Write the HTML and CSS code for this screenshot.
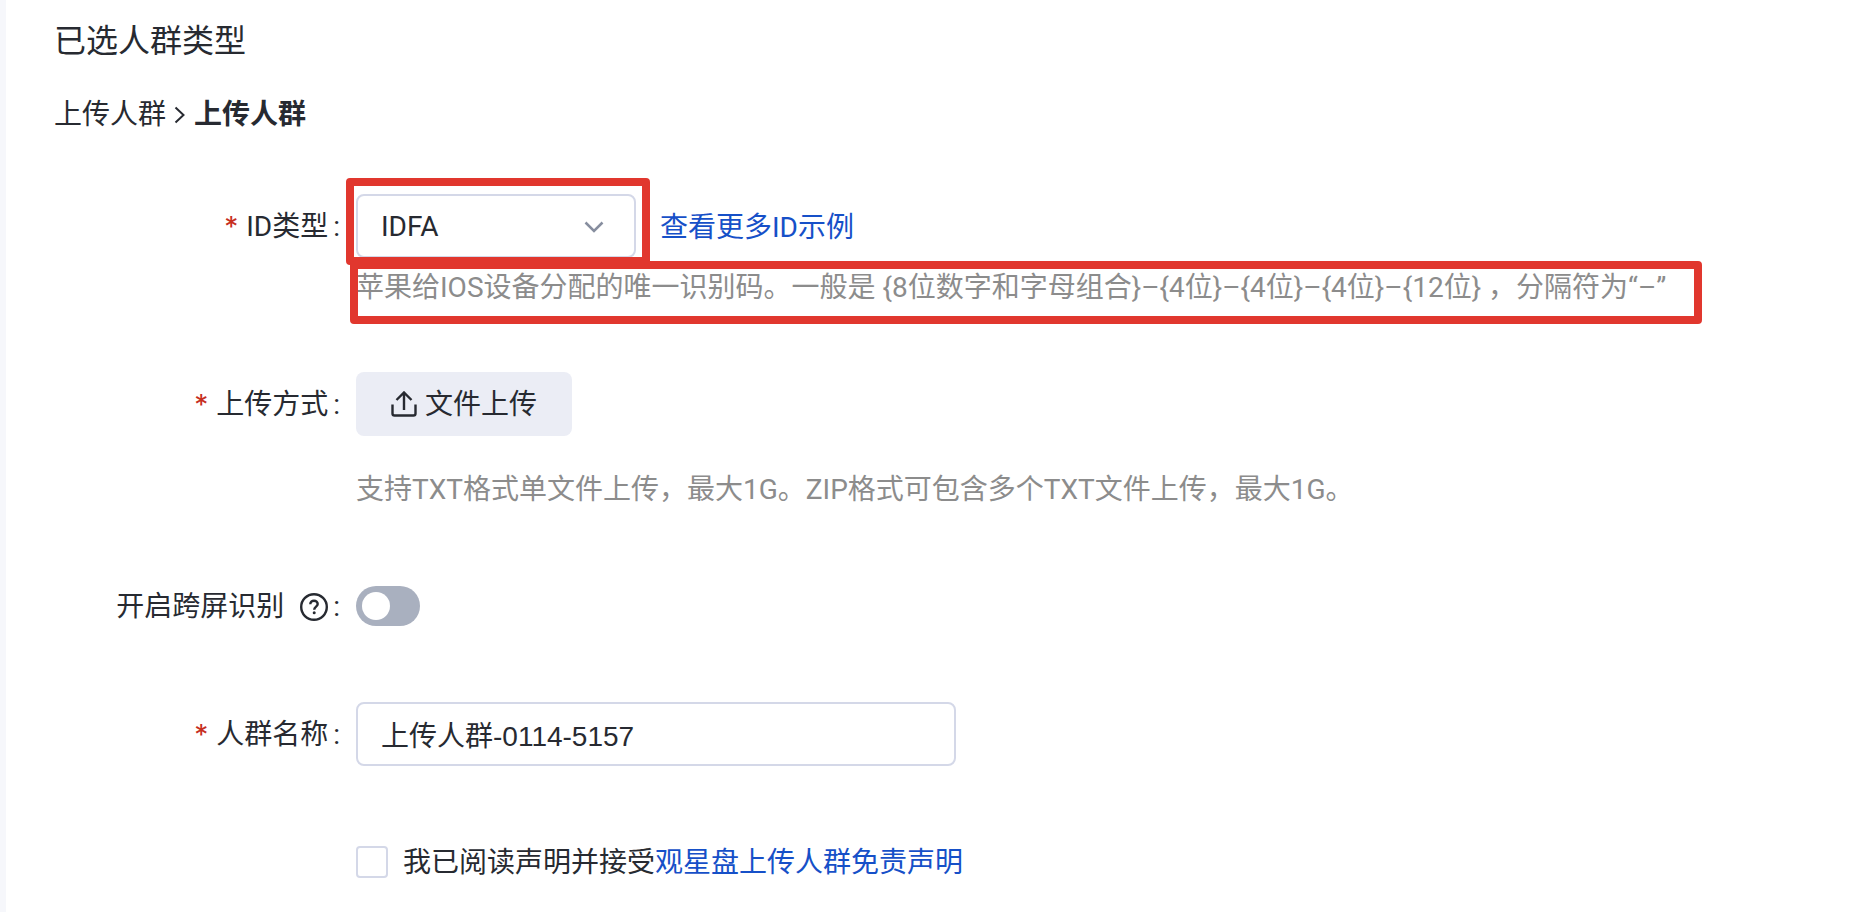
FILE: index.html
```html
<!DOCTYPE html>
<html lang="zh-CN">
<head>
<meta charset="utf-8">
<title>上传人群</title>
<link rel="stylesheet" href="styles.css">
</head>
<body>
<main class="page">
  <h1 class="title">已选人群类型</h1>
  <nav class="crumbs">
    <span>上传人群</span>
    <svg class="crumb-sep" viewBox="0 0 12 20" aria-hidden="true"><path d="M1.5 2.5 9.5 10l-8 7.5"/></svg>
    <strong>上传人群</strong>
  </nav>

  <form class="form">
    <div class="row row-id">
      <label class="label" for="id-type"><span class="req">*</span>ID类型<span class="colon">:</span></label>
      <div class="field">
        <div class="line">
          <div class="select-box">
            <select id="id-type" class="select"><option>IDFA</option></select>
            <svg class="chevron" viewBox="0 0 20 12" aria-hidden="true"><path d="M1.5 1.5 10 10l8.500-8.500"/></svg>
            <span class="mark mark-select"></span>
          </div>
          <a class="link more" href="#">查看更多ID示例</a>
        </div>
        <div class="hint-box">
          <p class="hint">苹果给IOS设备分配的唯一识别码。一般是 {8位数字和字母组合}–{4位}–{4位}–{4位}–{12位} ，分隔符为“–”</p>
          <span class="mark mark-hint"></span>
        </div>
      </div>
    </div>

    <div class="row row-upload">
      <label class="label" for="upload"><span class="req">*</span>上传方式<span class="colon">:</span></label>
      <div class="field">
        <button id="upload" class="upload" type="button">
          <svg class="upload-icon" viewBox="0 0 26 26" aria-hidden="true"><path d="M1.500 13.500v9a2 2 0 0 0 2 2h19a2 2 0 0 0 2-2v-9M13 19V2M5.500 9 13 1.500 20.500 9"/></svg>
          <span class="upload-text">文件上传</span>
        </button>
        <p class="hint hint-upload">支持TXT格式单文件上传，最大1G。ZIP格式可包含多个TXT文件上传，最大1G。</p>
      </div>
    </div>

    <div class="row row-cross">
      <label class="label" for="cross">开启跨屏识别
        <svg class="help" viewBox="0 0 28 28" aria-hidden="true"><circle cx="14" cy="14" r="12.800"/><path d="M10.300 11.300c0-2.200 1.600-3.600 3.700-3.600s3.700 1.400 3.700 3.300c0 2.500-3.500 2.700-3.500 5.700"/><circle class="dot" cx="14.200" cy="19.800" r="1.500"/></svg><span class="colon">:</span></label>
      <div class="field line">
        <input id="cross" class="switch" type="checkbox" role="switch">
      </div>
    </div>

    <div class="row row-name">
      <label class="label" for="name"><span class="req">*</span>人群名称<span class="colon">:</span></label>
      <div class="field">
        <input id="name" class="text" type="text" value="上传人群-0114-5157">
      </div>
    </div>

    <div class="row row-agree">
      <div class="field line agree">
        <input id="agree" class="check" type="checkbox">
        <span class="agree-text"><label for="agree">我已阅读声明并接受</label><a class="link" href="#">观星盘上传人群免责声明</a></span>
      </div>
    </div>
  </form>
</main>
</body>
</html>
```
FILE: styles.css
```css
* {
  box-sizing: border-box;
}

body {
  margin: 0;
  background: #fff;
  color: #272a31;
  font: 28px/40px Roboto, "Noto Sans CJK SC", sans-serif;
}

.page {
  min-height: 100vh;
  padding: 21px 48px 0;
  border-left: 6px solid #f6f7fb;
}

.title {
  margin: 0;
  font-size: 32px;
  font-weight: 400;
  line-height: 40px;
}

.crumbs {
  display: flex;
  align-items: center;
  gap: 8px;
  margin-top: 34px;
}

.crumb-sep {
  width: 12px;
  height: 20px;
  fill: none;
  stroke: #272a31;
  stroke-width: 2;
}

.form {
  margin-top: 59px;
}

.row {
  display: grid;
  grid-template-columns: 286px minmax(0, 1fr);
  column-gap: 16px;
}

.row-upload {
  margin-top: 64px;
}

.row-cross {
  margin-top: 64px;
}

.row-name,
.row-agree {
  margin-top: 64px;
}

.label {
  display: flex;
  align-items: center;
  justify-content: flex-end;
  height: 64px;
  padding-top: 2px;
  white-space: nowrap;
}

.req {
  margin-right: 8px;
  color: #c72f1e;
  font-family: Inter, sans-serif;
}

.colon {
  margin-left: 5px;
}

.field {
  grid-column: 2;
}

.line {
  display: flex;
  align-items: center;
  min-height: 64px;
}

.more {
  padding-top: 4px;
}

.agree-text,
.upload-text {
  padding-top: 2px;
}

.select-box {
  position: relative;
  width: 280px;
  margin-right: 24px;
}

.select,
.text {
  display: block;
  width: 100%;
  height: 64px;
  padding: 0 23px;
  border: 2px solid #d4d8e8;
  border-radius: 8px;
  background: #fff;
  color: inherit;
  font: inherit;
  appearance: none;
}

.select {
  padding-top: 2px;
}

.text {
  max-width: 600px;
  font-family: "Liberation Sans", "Noto Sans CJK SC", sans-serif;
}

.chevron {
  position: absolute;
  top: 27px;
  right: 32px;
  width: 20px;
  height: 12px;
  fill: none;
  stroke: #878e9f;
  stroke-width: 2.5;
  pointer-events: none;
}

.mark {
  position: absolute;
  border: 8px solid #e1372e;
  border-radius: 4px;
  pointer-events: none;
}

.mark-select {
  inset: -16px -14px -7px -10px;
}

.mark-hint {
  inset: -7px -36px -16px -6px;
}

.link {
  color: #1650c8;
  text-decoration: none;
}

.hint-box {
  position: relative;
  width: fit-content;
  margin-top: 10px;
}

.hint {
  margin: 0;
  color: #8c8c8c;
}

.upload {
  display: flex;
  align-items: center;
  gap: 8px;
  height: 64px;
  padding: 0 35px;
  border: 0;
  border-radius: 8px;
  background: #ebedf5;
  color: inherit;
  font: inherit;
}

.upload-icon {
  width: 26px;
  height: 26px;
  fill: none;
  stroke: #272a31;
  stroke-width: 2.4;
}

.hint-upload {
  margin-top: 34px;
}

.help {
  width: 28px;
  height: 28px;
  margin-left: 16px;
  fill: none;
  stroke: #272a31;
  stroke-width: 2.4;
}

.help .dot {
  fill: #272a31;
  stroke: none;
}

.switch {
  width: 64px;
  height: 40px;
  margin: 0;
  padding: 6px;
  border-radius: 20px;
  background: #a9b0bf;
  appearance: none;
}

.switch::before {
  content: "";
  display: block;
  width: 28px;
  height: 28px;
  border-radius: 50%;
  background: #fff;
}

.check {
  width: 32px;
  height: 32px;
  margin: 0;
  border: 2px solid #d4d8e8;
  border-radius: 4px;
  background: #fff;
  appearance: none;
}

.agree {
  gap: 15px;
}
```
